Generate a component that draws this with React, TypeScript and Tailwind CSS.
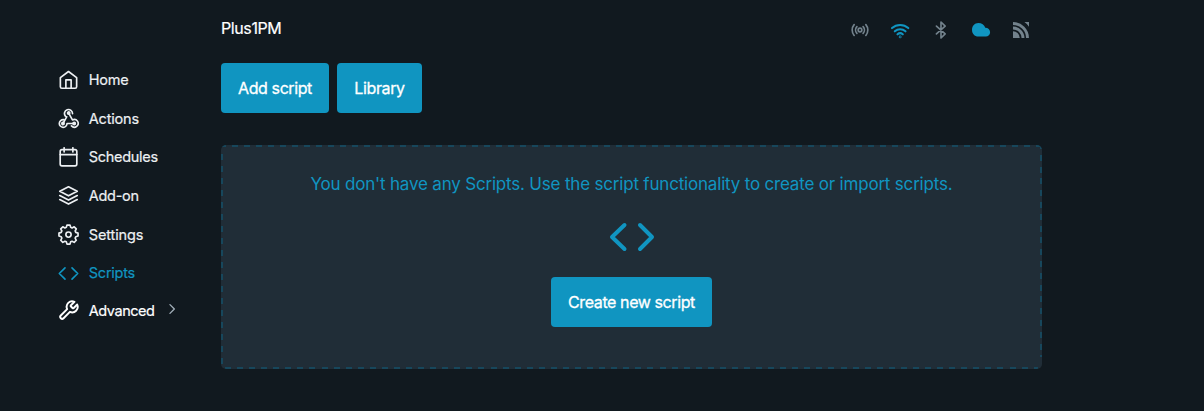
import React from "react";

type IconProps = { className?: string; children: React.ReactNode; sw?: number; box?: string };

function Icon({ className = "", children, sw = 2, box = "0 0 24 24" }: IconProps) {
  return (
    <svg viewBox={box} fill="none" stroke="currentColor" strokeWidth={sw} strokeLinecap="round" strokeLinejoin="round" className={`shrink-0 ${className}`}>
      {children}
    </svg>
  );
}

const nav = [
  {
    label: "Home", color: "text-[#edf0f3]", tracking: "tracking-[-0.28px]",
    icon: <><path d="M2.700 8.800 12 1.700l9.300 7.100V19.200a1.700 1.700 0 0 1-1.700 1.700H4.400a1.700 1.700 0 0 1-1.700-1.700z" /><path d="M9 20.900V11.300h6v9.600" /></>,
  },
  {
    label: "Actions", color: "text-[#edf0f3]", tracking: "tracking-[-0.2px]",
    icon: <>
      <path d="M8.500 9.300A4.600 4.600 0 1 1 16.600 6.500M12.300 6.100l4.200 7.500a4.400 4.400 0 1 1-1.100 6.900M5.700 17.700l4.200-7.600M6.300 13.300a4.400 4.400 0 1 0 4 4.400h8.200" />
      <circle cx="12.200" cy="5.800" r="1.300" fill="currentColor" /><circle cx="5.700" cy="17.700" r="1.300" fill="currentColor" /><circle cx="18.500" cy="17.700" r="1.300" fill="currentColor" />
    </>,
  },
  {
    label: "Schedules", color: "text-[#edf0f3]", tracking: "tracking-[-0.3px]",
    icon: <><rect x="2.500" y="3" width="19" height="18.500" rx="2" /><path d="M2.500 8.700h19M7 .9v4.800M17 .9v4.800" /></>,
  },
  {
    label: "Add-on", color: "text-[#edf0f3]", tracking: "tracking-[-0.3px]",
    icon: <><path d="m12 2 10 5.200-10 5.200L2 7.200z" /><path d="m2 12 10 5.200L22 12M2 16.600l10 5.200 10-5.200" /></>,
  },
  {
    label: "Settings", color: "text-[#edf0f3]", tracking: "tracking-[-0.14px]",
    icon: <><path d="M9.500 3.800 10.300 1.200h3.400l.8 2.600 1.600.7 2.400-1.300 2.400 2.400-1.300 2.400.7 1.600 2.600.8v3.400l-2.600.8-.7 1.600 1.300 2.400-2.400 2.400-2.400-1.300-1.600.7-.8 2.600h-3.400l-.8-2.600-1.600-.7-2.400 1.300-2.400-2.400 1.300-2.400-.7-1.600-2.600-.8v-3.400l2.600-.8.7-1.600-1.300-2.400 2.400-2.400 2.400 1.300z" /><circle cx="12" cy="12.100" r="3" /></>,
  },
  {
    label: "Scripts", color: "text-[#1095c1]", tracking: "tracking-[-0.25px]",
    icon: <path d="M8 5.500 1.500 12 8 18.500M16 5.500l6.500 6.500-6.500 6.500" />,
  },
  {
    label: "Advanced", color: "text-white -mt-px", tracking: "tracking-[-0.45px]",
    icon: <path d="M14.700 6.300a1 1 0 0 0 0 1.400l1.600 1.600a1 1 0 0 0 1.400 0l3.770-3.770a6 6 0 0 1-7.940 7.940l-6.910 6.910a2.120 2.120 0 0 1-3-3l6.910-6.910a6 6 0 0 1 7.940-7.940z" transform="translate(-.6 -.6) scale(1.050)" />,
  },
];

function Button({ children, width, tracking }: { children: string; width: string; tracking: string }) {
  return (
    <button className={`flex h-[50px] items-center justify-center whitespace-nowrap rounded bg-[#1095c1] text-base text-white ${width} ${tracking}`}>
      <span className="[-webkit-text-stroke:0.3px_white]">{children}</span>
    </button>
  );
}

export default function App() {
  return (
    <div className="flex h-[411px] w-[1204px] overflow-hidden bg-[#11191f] font-['Inter','Liberation_Sans',sans-serif]">
      <nav className="flex w-[221px] shrink-0 flex-col pl-[58px] pt-[61px]">
        {nav.map((n) => (
          <div key={n.label} className={`flex h-[38.550px] items-center ${n.color}`}>
            <Icon className="size-[21px]" sw={n.label === "Advanced" ? 2.1 : 1.9}>{n.icon}</Icon>
            <span className={`ml-[9.800px] text-[14.500px] [-webkit-text-stroke:0.2px_currentColor] ${n.tracking}`}>{n.label}</span>
            {n.label === "Advanced" && (
              <Icon className="ml-[10px] size-[14px] -translate-y-0.5 text-[#a2afb9]" sw={2.3}><path d="m8.500 4.500 7.500 7.500-7.500 7.500" /></Icon>
            )}
          </div>
        ))}
      </nav>
      <main className="w-[821px] shrink-0">
        <header className="flex h-[63px] items-start justify-between pr-[11px] pt-[16px]">
          <h1 className="text-base leading-6 tracking-[-0.4px] text-white [-webkit-text-stroke:0.2px_white]">Plus1PM</h1>
          <div className="flex h-[28px] items-center gap-5 text-[#73828c]">
            <Icon className="size-5" sw={2}>
              <circle cx="12" cy="12" r="2.200" />
              <path d="M8.300 16a5.800 5.800 0 0 1 0-8M15.700 8a5.800 5.800 0 0 1 0 8M5 18.500a10 10 0 0 1 0-13M19 5.500a10 10 0 0 1 0 13" />
            </Icon>
            <Icon className="size-[21px] text-[#1095c1]" sw={2.400}>
              <path d="M2.300 9.200a14 14 0 0 1 18.600 0M5.500 12.900a9.300 9.300 0 0 1 12.200 0M8.600 16.300a4.600 4.600 0 0 1 6 0" />
              <circle cx="11.600" cy="19.300" r=".4" />
            </Icon>
            <Icon className="size-5" sw={2}><path d="m6.500 7.300 10.500 9.400-5 4.900V2.400l5 4.900-10.500 9.400" /></Icon>
            <svg viewBox="0 0 20 20" className="size-5 text-[#1095c1]" fill="currentColor">
              <path d="M7.300 3C3.900 3 1 5.800 1 9.700c0 3.800 2.400 6.900 6.400 6.900h7.400c2.500 0 4.300-1.900 4.300-4.300 0-2.700-2-4.400-4.800-4.500C13.300 4.900 10.700 3 7.300 3z" />
            </svg>
            <svg viewBox="0 0 20 20" className="size-5" fill="none" stroke="currentColor" strokeWidth="2.900">
              <path d="M2 3.500c8 0 14.500 6.500 14.500 14.500M2 8c5.500 0 10 4.500 10 10" />
              <path d="M2 11.200A6.800 6.800 0 0 1 8.800 18H2zM13.400 2H18v4.700a16 16 0 0 0-4.600-4.700z" fill="currentColor" stroke="none" />
            </svg>
          </div>
        </header>
        <div className="flex gap-2">
          <Button width="w-[108px]" tracking="tracking-[-0.4px]">Add script</Button>
          <Button width="w-[85px]" tracking="tracking-[-0.35px]">Library</Button>
        </div>
        <section className="mt-8 flex h-[224px] flex-col items-center rounded-[5px] bg-[#202d37] bg-[image:repeating-linear-gradient(90deg,#17475c_0_6px,transparent_6px_12px),repeating-linear-gradient(90deg,#17475c_0_6px,transparent_6px_12.070px),repeating-linear-gradient(180deg,#17475c_0_6px,transparent_6px_12px),repeating-linear-gradient(180deg,#17475c_0_6px,transparent_6px_11.800px)] bg-[size:822px_2px,813px_2px,2px_212px,2px_214px] bg-[position:-1px_0,4px_222px,0_9px,819px_-2px] bg-no-repeat pt-[25px] text-[#1095c1]">
          <p className="whitespace-nowrap text-[17px] leading-7 tracking-[-0.190px]">You don't have any Scripts. Use the script functionality to create or import scripts.</p>
          <Icon className="mt-3 h-[54px] w-[48px]" sw={4} box="0 0 48 54">
            <path d="M16.500 15 4 27 16.500 39M32 15l12 12-12 12" />
          </Icon>
          <div className="mt-[13px]"><Button width="w-[161px]" tracking="tracking-[-0.4px]">Create new script</Button></div>
        </section>
      </main>
    </div>
  );
}
